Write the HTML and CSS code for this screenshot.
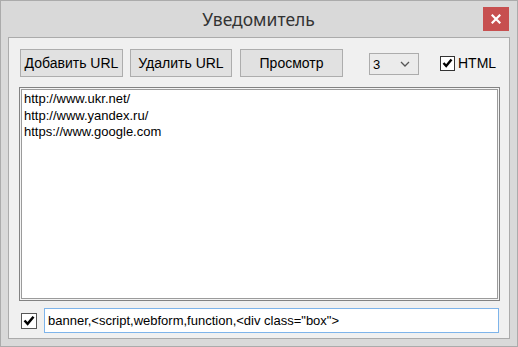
FILE: index.html
```html
<!DOCTYPE html>
<html>
<head>
<meta charset="utf-8">
<link rel="stylesheet" href="styles.css">
</head>
<body>
<div class="window">
  <div class="titlebar">
    <div class="title">Уведомитель</div>
    <div class="close"><svg width="10" height="10" viewBox="0 0 10 10"><path d="M1.5 1.5 L8.5 8.5 M8.5 1.5 L1.5 8.5" stroke="#fff" stroke-width="2.2" stroke-linecap="square"/></svg></div>
  </div>
  <div class="client">
    <div class="toolbar">
      <div class="btn b1">Добавить URL</div>
      <div class="btn b2">Удалить URL</div>
      <div class="btn b3">Просмотр</div>
      <div class="select"><span>3</span><svg width="10" height="6" viewBox="0 0 10 6"><path d="M1 1 L5 5 L9 1" fill="none" stroke="#555" stroke-width="1.3"/></svg></div>
      <label class="chk html"><span class="box"><svg width="11" height="10" viewBox="0 0 11 10"><path d="M1.5 5 L4.2 8 L9.5 1.5" fill="none" stroke="#000" stroke-width="2.4"/></svg></span><span class="lbl">HTML</span></label>
    </div>
    <div class="textarea">http://www.ukr.net/<br>http://www.yandex.ru/<br>https://www.google.com</div>
    <div class="bottom">
      <span class="box big"><svg width="12" height="11" viewBox="0 0 12 11"><path d="M1.5 5.5 L4.6 8.8 L10.5 1.8" fill="none" stroke="#000" stroke-width="2.5"/></svg></span>
      <div class="input">banner,&lt;script,webform,function,&lt;div class="box"&gt;</div>
    </div>
  </div>
</div>
</body>
</html>
```
FILE: styles.css
```css
html, body { margin: 0; padding: 0; background: #d9d9d9; }
.window {
  width: 518px; height: 347px; box-sizing: border-box;
  border: 1px solid #ababab; background: #d9d9d9;
  padding: 0 7px 7px 7px;
  display: flex; flex-direction: column;
  font-family: "Liberation Sans", Arial, sans-serif;
}
.titlebar {
  height: 36px; display: flex; align-items: flex-start; flex-shrink: 0;
}
.title {
  flex: 1; text-align: center; padding-left: 26px;
  font-family: "Noto Sans", "Open Sans", sans-serif; font-size: 17.5px; color: #333;
  line-height: 22px; padding-top: 7px;
}
.close {
  width: 26px; height: 24px; margin-top: 6px; margin-right: 1px;
  background: #c75050; display: flex; align-items: center; justify-content: center;
}
.client {
  flex: 1; border: 1px solid #ababab; background: #f0f0f0;
  display: flex; flex-direction: column;
  padding: 11px 9px 5px 10px;
}
.toolbar { display: flex; align-items: center; height: 28px; flex-shrink: 0; }
.btn {
  height: 28px; box-sizing: border-box; border: 1px solid #adadad; background: #e1e1e1;
  font-size: 14px; color: #000; display: flex; align-items: center; justify-content: center;
  font-family: "Liberation Sans", Arial, sans-serif;
}
.b1 { width: 103px; margin-left: 1px; }
.b2 { width: 102px; margin-left: 7px; }
.b3 { width: 103px; margin-left: 8px; }
.select {
  width: 50px; height: 22px; box-sizing: border-box; border: 1px solid #acacac;
  background: #ebebeb; margin-left: 26px; margin-top: 2px;
  display: flex; align-items: center; justify-content: space-between;
  padding: 0 8px 0 3px; font-size: 13px;
}
.chk { display: flex; align-items: center; margin-left: 21px; }
.box {
  width: 15px; height: 15px; box-sizing: border-box; border: 1px solid #333; background: #fff;
  display: flex; align-items: center; justify-content: center;
}
.lbl { font-size: 14px; margin-left: 3px; color: #000; }
.textarea {
  margin-top: 10px; flex: 1; box-sizing: border-box;
  border: 1px solid #828282; background: #fff;
  box-shadow: inset 0 0 0 1px #f4f4f4, inset 0 0 0 2px #9b9b9b;
  padding: 3px 4px; font-size: 13px; line-height: 16.5px; color: #000;
}
.bottom { display: flex; align-items: center; margin-top: 7px; flex-shrink: 0; height: 25px; }
.box.big { width: 16px; height: 16px; margin-left: 2px; border-color: #555; }
.input {
  margin-left: 7px; width: 455px; height: 25px; box-sizing: border-box;
  border: 1px solid #7eb4ea; background: #fff;
  font-size: 13px; padding-left: 3px; display: flex; align-items: center; color: #000;
}
```
